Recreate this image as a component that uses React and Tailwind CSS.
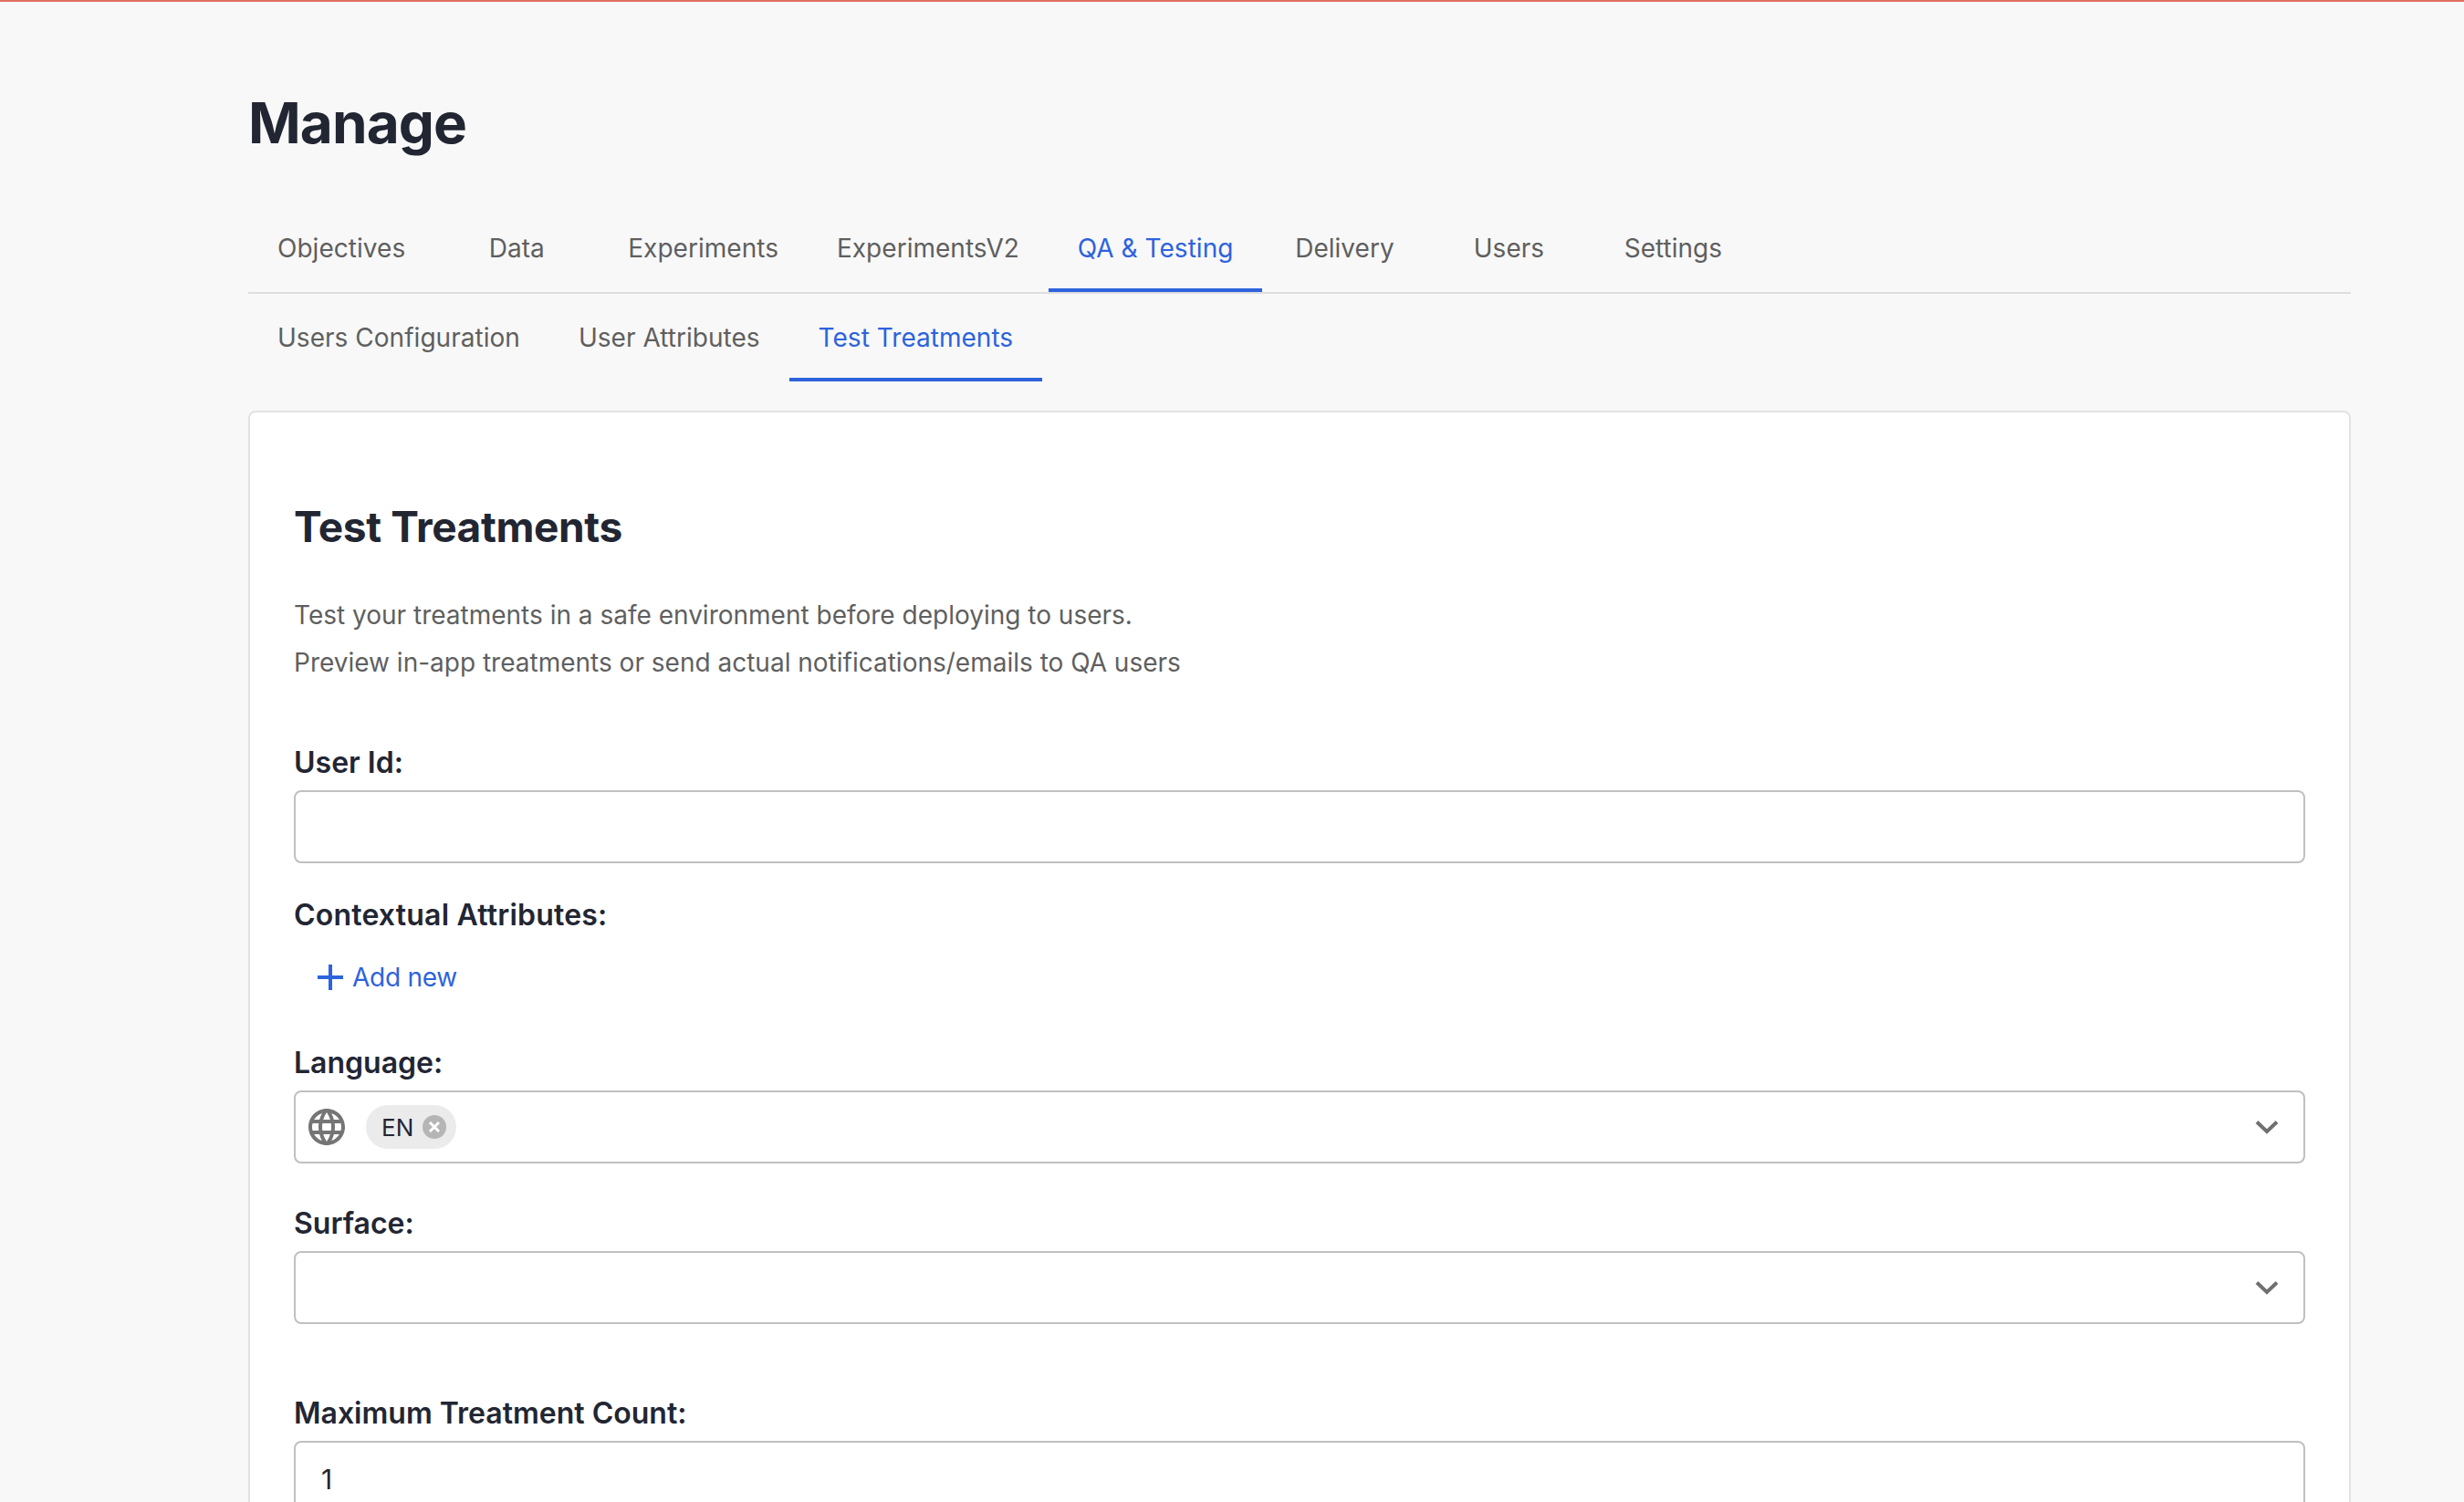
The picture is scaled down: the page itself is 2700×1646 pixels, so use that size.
import { MdLanguage } from 'react-icons/md';

const mainTabs = ['Objectives', 'Data', 'Experiments', 'ExperimentsV2', 'QA & Testing', 'Delivery', 'Users', 'Settings'];
const subTabs = ['Users Configuration', 'User Attributes', 'Test Treatments'];

function Tab({ label, active }) {
  return (
    <button
      type="button"
      className={`h-24 min-w-[180px] px-8 pt-1 border-b-4 text-center text-[28px] tracking-[0.03px] ${
        active ? 'border-[#2d63dc] text-[#2d63dc]' : 'border-transparent text-[#5f5f5f]'
      }`}
    >
      {label}
    </button>
  );
}

function Chevron() {
  return (
    <svg className="w-[28px] h-[18px] text-[#707070]" viewBox="0 0 28 18" fill="none" stroke="currentColor" strokeWidth="4">
      <path d="M3 3.5 14 14 25 3.5" />
    </svg>
  );
}

function Label({ children, className = '' }) {
  return <label className={`block h-10 leading-10 text-[32px] font-semibold text-[#222633] ${className}`}>{children}</label>;
}

function SelectBox({ children }) {
  return (
    <div className="flex items-center justify-between h-20 pl-[14px] pr-[26px] bg-white border-2 border-[#c0c0c0] rounded-lg">
      <div className="flex items-center">{children}</div>
      <Chevron />
    </div>
  );
}

export default function App() {
  return (
    <div className="h-screen overflow-hidden bg-[#f8f8f8] border-t-2 border-[#e0705f] pl-[272px] pr-[124px] font-['Inter',sans-serif]">
      <h1 className="mt-[97px] mb-[53px] h-[72px] leading-[72px] text-[62px] font-bold tracking-[-0.9px] text-[#222633]">Manage</h1>

      {/* Top level tabs */}
      <div className="flex border-b-2 border-[#dedede]">
        {mainTabs.map((t) => (
          <Tab key={t} label={t} active={t === 'QA & Testing'} />
        ))}
      </div>

      {/* Sub tabs */}
      <div className="flex mb-8">
        {subTabs.map((t) => (
          <Tab key={t} label={t} active={t === 'Test Treatments'} />
        ))}
      </div>

      <div className="bg-white border-2 border-[#e2e2e2] rounded-lg px-12 pt-[97px] pb-16">
        <h2 className="h-14 leading-[56px] text-[46px] font-bold tracking-[-0.37px] text-[#222633]">Test Treatments</h2>

        <div className="mt-[43px] text-[28px] leading-[52px] text-[#5f5f5f]">
          <p>Test your treatments in a safe environment before deploying to users.</p>
          <p>Preview in-app treatments or send actual notifications/emails to QA users</p>
        </div>

        <div className="mt-[64px]">
          <Label>User Id:</Label>
          <input className="block w-full h-20 mt-[10px] px-6 bg-white border-2 border-[#c0c0c0] rounded-lg outline-none" />
        </div>

        <div className="mt-[37px]">
          <Label className="tracking-[0.2px]">Contextual Attributes:</Label>
          <button type="button" className="flex items-center h-10 mt-[28px] pl-[26px] text-[28px] tracking-[-0.25px] text-[#2d63dc]">
            <svg className="w-[28px] h-[28px] mr-[10px]" viewBox="0 0 28 28" fill="none" stroke="currentColor" strokeWidth="4">
              <path d="M14 0v28M0 14h28" />
            </svg>
            Add new
          </button>
        </div>

        <div className="mt-[54px]">
          <Label>Language:</Label>
          <div className="mt-[10px]">
            <SelectBox>
              <MdLanguage className="w-[48px] h-[48px] text-[#757575] -ml-[4px] mr-[19px]" />
              <span className="flex items-center h-12 pl-[17px] pr-[11px] bg-[#ebebeb] rounded-full text-[26px] text-[#222633]">
                EN
                <svg className="w-[26px] h-[26px] ml-[10px]" viewBox="0 0 26 26">
                  <circle cx="13" cy="13" r="13" fill="#b5b5b5" />
                  <path d="M8 8l10 10M18 8 8 18" stroke="#fff" strokeWidth="3" />
                </svg>
              </span>
            </SelectBox>
          </div>
        </div>

        <div className="mt-[46px]">
          <Label>Surface:</Label>
          <div className="mt-[10px]">
            <SelectBox />
          </div>
        </div>

        <div className="mt-[78px]">
          <Label>Maximum Treatment Count:</Label>
          <input
            readOnly
            value="1"
            className="block w-full h-20 mt-[10px] pt-[3px] px-7 bg-white border-2 border-[#c0c0c0] rounded-lg outline-none text-[30px] text-[#222633]"
          />
        </div>
      </div>
    </div>
  );
}
